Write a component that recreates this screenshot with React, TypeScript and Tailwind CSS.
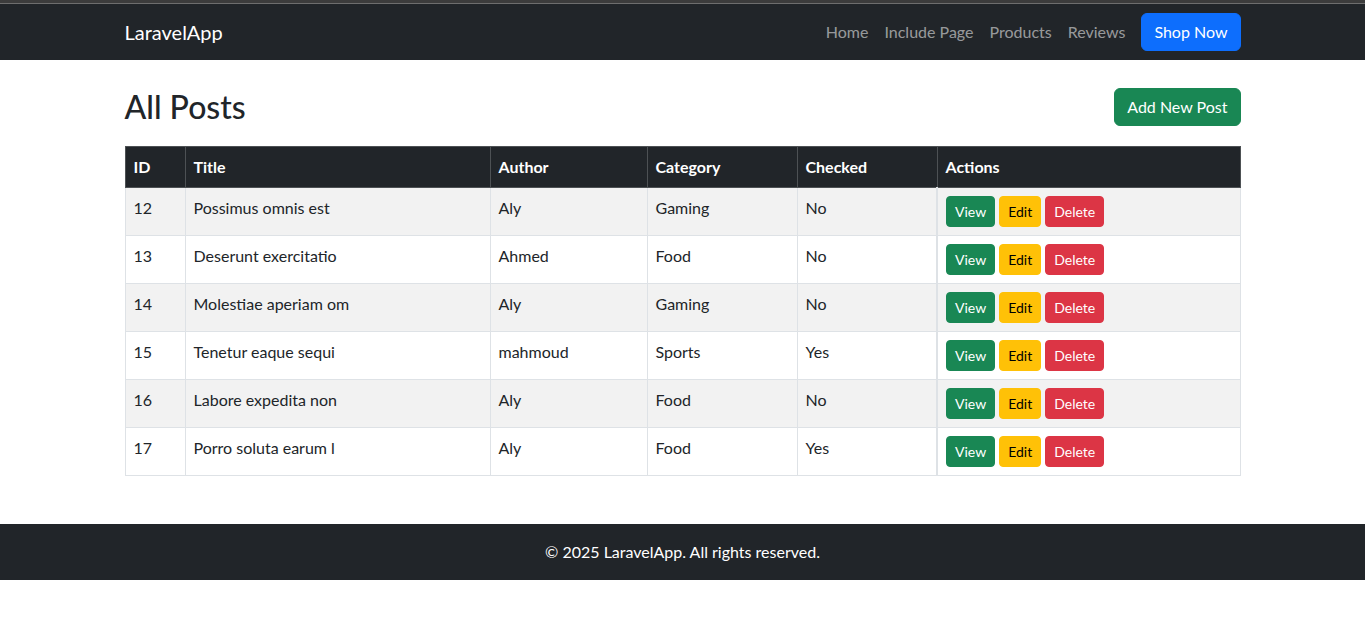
const posts = [
  { id: 12, title: "Possimus omnis est", author: "Aly", category: "Gaming", checked: "No" },
  { id: 13, title: "Deserunt exercitatio", author: "Ahmed", category: "Food", checked: "No" },
  { id: 14, title: "Molestiae aperiam om", author: "Aly", category: "Gaming", checked: "No" },
  { id: 15, title: "Tenetur eaque sequi", author: "mahmoud", category: "Sports", checked: "Yes" },
  { id: 16, title: "Labore expedita non", author: "Aly", category: "Food", checked: "No" },
  { id: 17, title: "Porro soluta earum l", author: "Aly", category: "Food", checked: "Yes" },
];

const navLinks = ["Home", "Include Page", "Products", "Reviews"];

export default function App() {
  return (
    <div className="min-h-[636px] bg-white text-[#212529] font-['Lato',sans-serif] text-base leading-6">
      <div className="h-1 bg-[#3c3c3c] border-b border-[#6e6e6e]" />

      {/* Navbar */}
      <nav className="bg-[#212529] py-2">
        <div className="mx-auto w-[1140px] px-3 flex items-center justify-between">
          <a className="text-white text-[20px] leading-[30px] py-[5px]">LaravelApp</a>
          <div className="flex items-center">
            {navLinks.map((link) => (
              <a key={link} className="px-2 py-2 text-[#ffffff8c]">
                {link}
              </a>
            ))}
            <button className="ml-2 bg-[#0d6efd] text-white rounded-md px-3 py-[6px] leading-6 border border-[#0d6efd]">
              Shop Now
            </button>
          </div>
        </div>
      </nav>

      {/* Content */}
      <main className="mx-auto w-[1140px] px-3 mt-7">
        <div className="flex items-center justify-between mb-5">
          <h2 className="text-[32px] leading-[38px] font-medium">All Posts</h2>
          <button className="bg-[#198754] text-white rounded-md px-3 py-[6px] leading-6 border border-[#198754]">
            Add New Post
          </button>
        </div>

        <table className="w-full border-collapse border border-[#dee2e6]">
          <thead>
            <tr className="bg-[#212529] text-white font-bold text-left">
              <th className="w-[60px] p-2 border border-[#4d5154]">ID</th>
              <th className="w-[305px] p-2 border border-[#4d5154]">Title</th>
              <th className="w-[157px] p-2 border border-[#4d5154]">Author</th>
              <th className="w-[150px] p-2 border border-[#4d5154]">Category</th>
              <th className="w-[140px] p-2 border border-[#4d5154]">Checked</th>
              <th className="p-2 border border-[#4d5154]">Actions</th>
            </tr>
          </thead>
          <tbody>
            {posts.map((p, i) => (
              <tr key={p.id} className={i % 2 === 0 ? "bg-[#f2f2f2]" : "bg-white"}>
                <td className="p-2 border border-[#dee2e6] align-top">{p.id}</td>
                <td className="p-2 border border-[#dee2e6] align-top">{p.title}</td>
                <td className="p-2 border border-[#dee2e6] align-top">{p.author}</td>
                <td className="p-2 border border-[#dee2e6] align-top">{p.category}</td>
                <td className="p-2 border border-[#dee2e6] align-top">{p.checked}</td>
                <td className="p-2 border border-[#dee2e6] border-l-2 align-top">
                  <div className="flex gap-1">
                    <button className="bg-[#198754] text-white text-sm leading-[21px] px-2 py-1 rounded border border-[#198754]">
                      View
                    </button>
                    <button className="bg-[#ffc107] text-black text-sm leading-[21px] px-2 py-1 rounded border border-[#ffc107]">
                      Edit
                    </button>
                    <button className="bg-[#dc3545] text-white text-sm leading-[21px] px-2 py-1 rounded border border-[#dc3545]">
                      Delete
                    </button>
                  </div>
                </td>
              </tr>
            ))}
          </tbody>
        </table>
      </main>

      {/* Footer */}
      <footer className="mt-12 bg-[#212529] text-white text-center py-4">
        © 2025 LaravelApp. All rights reserved.
      </footer>
    </div>
  );
}
